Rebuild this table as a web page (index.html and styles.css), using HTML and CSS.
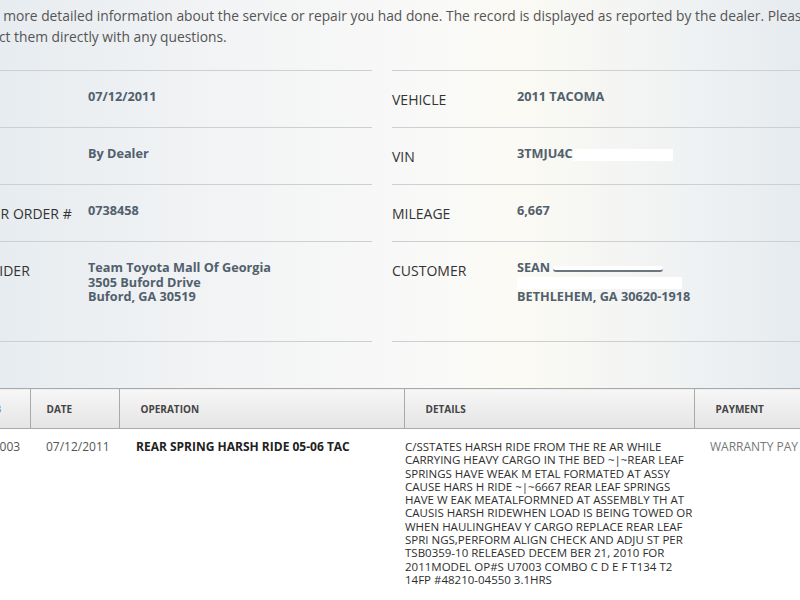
FILE: index.html
```html
<!DOCTYPE html>
<html lang="en">
<head>
  <meta charset="UTF-8">
  <title>Service Record</title>
  <link rel="stylesheet" href="styles.css">
</head>
<body>
  <div class="top">
    <div class="page">
      <p class="intro">It gives more detailed information about the service or repair you had done. The record is displayed as reported by the dealer. Please<br>contact them directly with any questions.</p>

      <div class="details">
        <div class="col">
          <div class="row">
            <div class="label">DATE</div>
            <div class="value">07/12/2011</div>
          </div>
          <div class="row">
            <div class="label">TYPE</div>
            <div class="value">By Dealer</div>
          </div>
          <div class="row">
            <div class="label">REPAIR ORDER #</div>
            <div class="value">0738458</div>
          </div>
          <div class="row tall">
            <div class="label">PROVIDER</div>
            <div class="value">Team Toyota Mall Of Georgia<br>3505 Buford Drive<br>Buford, GA 30519</div>
          </div>
        </div>

        <div class="col">
          <div class="row">
            <div class="label">VEHICLE</div>
            <div class="value">2011 TACOMA</div>
          </div>
          <div class="row">
            <div class="label">VIN</div>
            <div class="value">3TMJU4C<span class="redact vin"></span></div>
          </div>
          <div class="row">
            <div class="label">MILEAGE</div>
            <div class="value">6,667</div>
          </div>
          <div class="row tall">
            <div class="label">CUSTOMER</div>
            <div class="value">SEAN <span class="redact name"></span><br><span class="redact street"></span><br>BETHLEHEM, GA 30620-1918</div>
          </div>
        </div>
      </div>
    </div>
  </div>

  <div class="page">
    <table class="ops">
      <thead>
        <tr>
          <th class="c-job">JOB</th>
          <th class="c-date">DATE</th>
          <th class="c-op">OPERATION</th>
          <th class="c-det">DETAILS</th>
          <th class="c-pay">PAYMENT</th>
        </tr>
      </thead>
      <tbody>
        <tr>
          <td class="c-job">U7003</td>
          <td class="c-date">07/12/2011</td>
          <td class="c-op"><b>REAR SPRING HARSH RIDE 05-06 TAC</b></td>
          <td class="c-det">C/SSTATES HARSH RIDE FROM THE RE AR WHILE<br>CARRYING HEAVY CARGO IN THE BED ~|~REAR LEAF<br>SPRINGS HAVE WEAK M ETAL FORMATED AT ASSY<br>CAUSE HARS H RIDE ~|~6667 REAR LEAF SPRINGS<br>HAVE W EAK MEATALFORMNED AT ASSEMBLY TH AT<br>CAUSIS HARSH RIDEWHEN LOAD IS BEING TOWED OR<br>WHEN HAULINGHEAV Y CARGO REPLACE REAR LEAF<br>SPRI NGS,PERFORM ALIGN CHECK AND ADJU ST PER<br>TSB0359-10 RELEASED DECEM BER 21, 2010 FOR<br>2011MODEL OP#S U7003 COMBO C D E F T134 T2<br>14FP #48210-04550 3.1HRS</td>
          <td class="c-pay">WARRANTY PAY</td>
        </tr>
      </tbody>
    </table>
  </div>
</body>
</html>
```

FILE: styles.css
```css
* {
  box-sizing: border-box;
}

html, body {
  margin: 0;
  padding: 0;
  overflow: hidden;
}

body {
  font-family: "Open Sans", "DejaVu Sans", sans-serif;
  background-color: #fff;
  color: #333;
}

.top {
  background: linear-gradient(to right, #e7ecf0 0%, #f3f4f5 30%, #f9f9f8 55%, #fbfaf4 65%, #eef1f3 88%, #e6ebef 100%);
  padding-bottom: 46px;
}

.page {
  width: 880px;
  margin-left: -37px;
}

.intro {
  margin: 0;
  padding: 5px 0 0 0;
  font-size: 13.8px;
  line-height: 21px;
  color: #555;
  text-indent: -8px;
}

.details {
  display: grid;
  grid-template-columns: 409px 409px;
  column-gap: 20px;
  margin-top: 23px;
}

.row {
  display: grid;
  grid-template-columns: 125px 1fr;
  height: 57px;
  border-top: 1px solid #cdd0d2;
}

.row.tall {
  height: 101px;
  border-bottom: 1px solid #cdd0d2;
}

.label {
  padding-top: 20px;
  font-size: 14px;
  line-height: 18px;
  color: #333;
}

.value {
  padding-top: 18px;
  font-size: 12.7px;
  font-weight: 700;
  line-height: 14.5px;
  color: #51606d;
}

.redact {
  display: inline-block;
  background: #fff;
  vertical-align: middle;
}

.redact.vin {
  width: 100px;
  height: 12px;
}

.redact.name {
  width: 110px;
  height: 6px;
  border-bottom: 2px solid #6b7680;
  border-radius: 3px;
}

.redact.street {
  width: 165px;
  height: 12px;
}

.ops {
  width: 100%;
  border-collapse: collapse;
  table-layout: fixed;
}

.ops th {
  height: 40px;
  padding: 0 0 0 21px;
  font-size: 10px;
  font-weight: 700;
  text-align: left;
  color: #444;
  background: linear-gradient(to bottom, #f7f7f7, #e4e4e4);
  border-top: 1px solid #a9a9a9;
  border-bottom: 1px solid #a9a9a9;
  border-left: 1px solid #a9a9a9;
}

.ops th.c-job {
  border-left: none;
  padding-left: 20px;
}

.ops th.c-date {
  padding-left: 16px;
}

.ops td {
  vertical-align: top;
  padding: 11px 0 0 0;
  font-size: 12px;
  line-height: 13.3px;
  color: #444;
  white-space: nowrap;
}

.c-job {
  width: 67px;
}

.c-date {
  width: 89px;
}

.c-op {
  width: 285px;
}

.c-det {
  width: 290px;
}

.ops td.c-job {
  padding-left: 21px;
  color: #555;
}

.ops td.c-date {
  padding-left: 16px;
  color: #555;
}

.ops td.c-op {
  padding-left: 17px;
  color: #222;
}

.ops td.c-det {
  padding-left: 1px;
  font-size: 11.5px;
  color: #2e2e2e;
}

.ops td.c-pay {
  padding-left: 16px;
  color: #777;
}
```
